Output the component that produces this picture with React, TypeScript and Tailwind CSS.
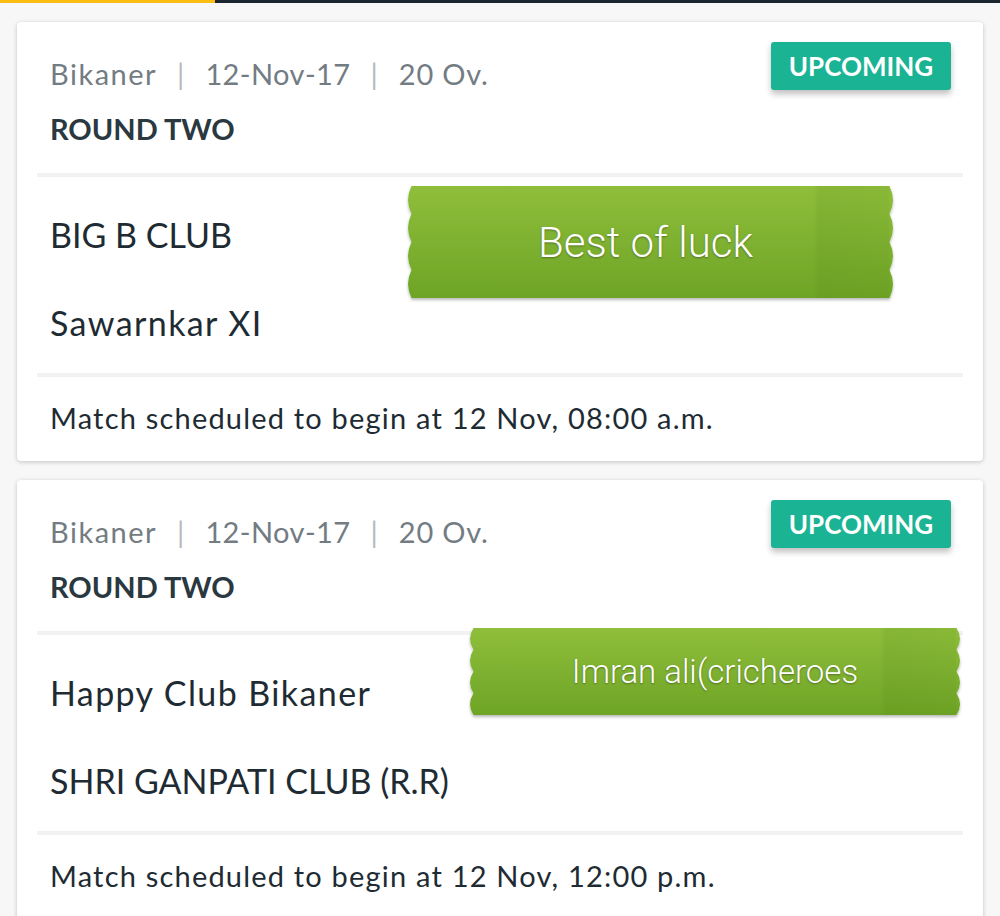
import React from "react";

interface MatchProps {
  city: string;
  date: string;
  overs: string;
  round: string;
  teamA: string;
  teamB: string;
  startsAt: string;
  sticker: { text: string; left: number; top: number; width: number; height: number; size: number; shift: number };
}

const ribbonPath = (w: number, h: number, n: number, d: number) => {
  const s = h / n;
  let p = `M ${d} 0 L ${w - d} 0 `;
  for (let i = 0; i < n; i++) {
    p += `Q ${w + d} ${(i + 0.5) * s} ${w - d} ${(i + 1) * s} `;
  }
  p += `L ${d} ${h} `;
  for (let i = n; i > 0; i--) {
    p += `Q ${-d} ${(i - 0.5) * s} ${d} ${(i - 1) * s} `;
  }
  return p + "Z";
};

const Sticker = ({ text, left, top, width, height, size, shift }: MatchProps["sticker"]) => {
  const id = `g${left}${top}`;
  return (
    <div className="absolute" style={{ left, top, width, height }}>
      <svg width={width} height={height + 4} className="absolute left-0 top-0 overflow-visible">
        <defs>
          <linearGradient id={id} x1="0" y1="0" x2="0" y2="1">
            <stop offset="0" stopColor="#8fbe3b" />
            <stop offset="1" stopColor="#6ea426" />
          </linearGradient>
          <linearGradient id={`${id}b`} x1="0" y1="0" x2="1" y2="0">
            <stop offset="0" stopColor="#3f6e08" stopOpacity="0" />
            <stop offset="0.08" stopColor="#3f6e08" stopOpacity="0.1" />
            <stop offset="1" stopColor="#3f6e08" stopOpacity="0.06" />
          </linearGradient>
          <filter id={`${id}s`} x="-5%" y="-10%" width="110%" height="130%">
            <feDropShadow dx="0" dy="2" stdDeviation="1.5" floodColor="#000" floodOpacity="0.28" />
          </filter>
        </defs>
        <path d={ribbonPath(width, height, 4, 3.5)} fill={`url(#${id})`} filter={`url(#${id}s)`} />
        <rect x={width - 80} y="0" width="76" height={height} fill={`url(#${id}b)`} />
      </svg>
      <div
        className="relative flex h-full items-center justify-center text-white [text-shadow:0_1px_2px_rgba(0,0,0,0.35)]"
        style={{ fontFamily: "Roboto, 'Liberation Sans', sans-serif", fontWeight: 300, fontSize: size, paddingRight: shift }}
      >
        {text}
      </div>
    </div>
  );
};

const teamTracking = (name: string) => (name === name.toUpperCase() ? "tracking-normal" : "tracking-[1.4px]");

const MatchCard = ({ city, date, overs, round, teamA, teamB, startsAt, sticker }: MatchProps) => {
  return (
    <div className="relative mx-[17px] rounded-[4px] bg-white shadow-[0_1px_4px_rgba(0,0,0,0.22)]">
      {/*Header*/}
      <div className="flex justify-between pl-[33px] pr-[32px] pt-[34px] pb-[26px]">
        <div>
          <div className="flex h-[36px] items-center text-[29px] text-[#737c82]">
            <span className="tracking-[1.5px]">{city}</span>
            <span className="ml-[20px] mr-[21px] text-[#b5babd]">|</span>
            <span className="tracking-[0.4px]">{date}</span>
            <span className="ml-[20px] mr-[21px] text-[#b5babd]">|</span>
            <span className="tracking-[0.8px]">{overs}</span>
          </div>
          <div className="mt-[19px] flex h-[36px] items-center text-[29px] font-bold text-[#2a3840]">{round}</div>
        </div>
        <div className="-mt-[14px] flex h-[48px] w-[180px] items-center justify-center rounded-[3px] bg-[#1ab394] text-[26px] font-bold text-white shadow-[0_4px_6px_rgba(0,0,0,0.25)]">
          UPCOMING
        </div>
      </div>
      <div className="mx-[20px] h-[4px] bg-[#f2f2f2]" />
      {/*Teams*/}
      <div className="pl-[33px] pt-[13px] pb-[7px] text-[34px] text-[#1e2b33]">
        <div className={`flex h-[88px] items-center ${teamTracking(teamA)}`}>{teamA}</div>
        <div className={`flex h-[88px] items-center ${teamTracking(teamB)}`}>{teamB}</div>
      </div>
      <div className="mx-[20px] h-[4px] bg-[#f2f2f2]" />
      <div className="flex h-[84px] items-center pl-[33px] pb-[2px] text-[29px] tracking-[1.2px] text-[#1e2b33]">{startsAt}</div>
      <Sticker {...sticker} />
    </div>
  );
};

export default function App() {
  return (
    <div className="min-h-[916px] overflow-hidden bg-[#f7f7f7]" style={{ fontFamily: "Lato, 'Open Sans', sans-serif" }}>
      <div className="flex h-[3px]">
        <div className="w-[215px] bg-[#fbbd12]" />
        <div className="flex-1 bg-[#1b2530]" />
      </div>
      <div className="flex flex-col gap-[19px] pt-[19px]">
        <MatchCard
          city="Bikaner"
          date="12-Nov-17"
          overs="20 Ov."
          round="ROUND TWO"
          teamA="BIG B CLUB"
          teamB="Sawarnkar XI"
          startsAt="Match scheduled to begin at 12 Nov, 08:00 a.m."
          sticker={{ text: "Best of luck", left: 391, top: 164, width: 485, height: 112, size: 42, shift: 10 }}
        />
        <MatchCard
          city="Bikaner"
          date="12-Nov-17"
          overs="20 Ov."
          round="ROUND TWO"
          teamA="Happy Club Bikaner"
          teamB="SHRI GANPATI CLUB (R.R)"
          startsAt="Match scheduled to begin at 12 Nov, 12:00 p.m."
          sticker={{ text: "Imran ali(cricheroes", left: 453, top: 148, width: 490, height: 87, size: 33, shift: 0 }}
        />
      </div>
    </div>
  );
}
